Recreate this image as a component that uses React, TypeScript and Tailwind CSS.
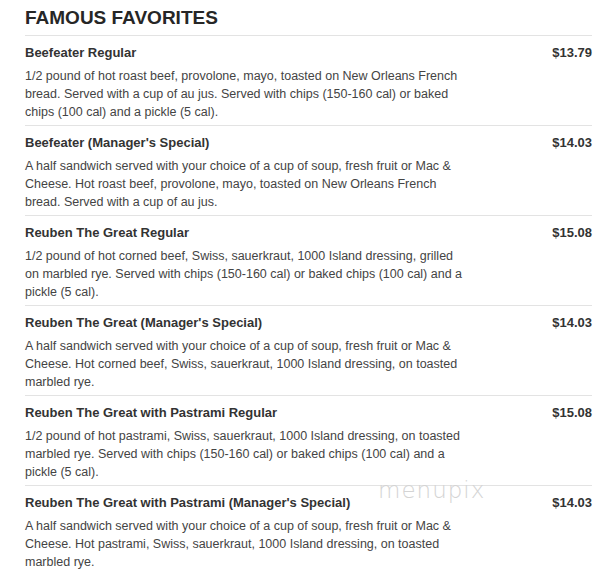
const items = [
  {
    name: "Beefeater Regular",
    price: "$13.79",
    desc: "1/2 pound of hot roast beef, provolone, mayo, toasted on New Orleans French bread. Served with a cup of au jus. Served with chips (150-160 cal) or baked chips (100 cal) and a pickle (5 cal).",
  },
  {
    name: "Beefeater (Manager's Special)",
    price: "$14.03",
    desc: "A half sandwich served with your choice of a cup of soup, fresh fruit or Mac & Cheese. Hot roast beef, provolone, mayo, toasted on New Orleans French bread. Served with a cup of au jus.",
  },
  {
    name: "Reuben The Great Regular",
    price: "$15.08",
    desc: "1/2 pound of hot corned beef, Swiss, sauerkraut, 1000 Island dressing, grilled on marbled rye. Served with chips (150-160 cal) or baked chips (100 cal) and a pickle (5 cal).",
  },
  {
    name: "Reuben The Great (Manager's Special)",
    price: "$14.03",
    desc: "A half sandwich served with your choice of a cup of soup, fresh fruit or Mac & Cheese. Hot corned beef, Swiss, sauerkraut, 1000 Island dressing, on toasted marbled rye.",
  },
  {
    name: "Reuben The Great with Pastrami Regular",
    price: "$15.08",
    desc: "1/2 pound of hot pastrami, Swiss, sauerkraut, 1000 Island dressing, on toasted marbled rye. Served with chips (150-160 cal) or baked chips (100 cal) and a pickle (5 cal).",
  },
  {
    name: "Reuben The Great with Pastrami (Manager's Special)",
    price: "$14.03",
    desc: "A half sandwich served with your choice of a cup of soup, fresh fruit or Mac & Cheese. Hot pastrami, Swiss, sauerkraut, 1000 Island dressing, on toasted marbled rye.",
  },
];

const App = () => {
  return (
    <div className="relative w-[611px] h-[571px] overflow-hidden bg-white font-['Liberation_Sans',Arial,sans-serif]">
      <div className="pl-[25px] pr-[19px]">
        <h2 className="pt-[6px] h-[35px] text-[19px] leading-[24px] font-bold text-[#262626]">
          FAMOUS FAVORITES
        </h2>
        {items.map((item) => (
          <div key={item.name} className="h-[90px] border-t border-[#e3e3e3] pt-[8px]">
            <div className="flex justify-between text-[13px] leading-[18px] font-bold text-[#333]">
              <span>{item.name}</span>
              <span>{item.price}</span>
            </div>
            <p className="mt-[5px] w-[445px] text-[12.5px] leading-[18px] text-[#444]">
              {item.desc}
            </p>
          </div>
        ))}
      </div>
      <div className="absolute left-[378px] top-[481px] text-[23px] leading-[18px] font-light tracking-[1px] text-[#d4d4d4] font-['DejaVu_Sans',sans-serif]">
        menupix
      </div>
    </div>
  );
};

export default App;
